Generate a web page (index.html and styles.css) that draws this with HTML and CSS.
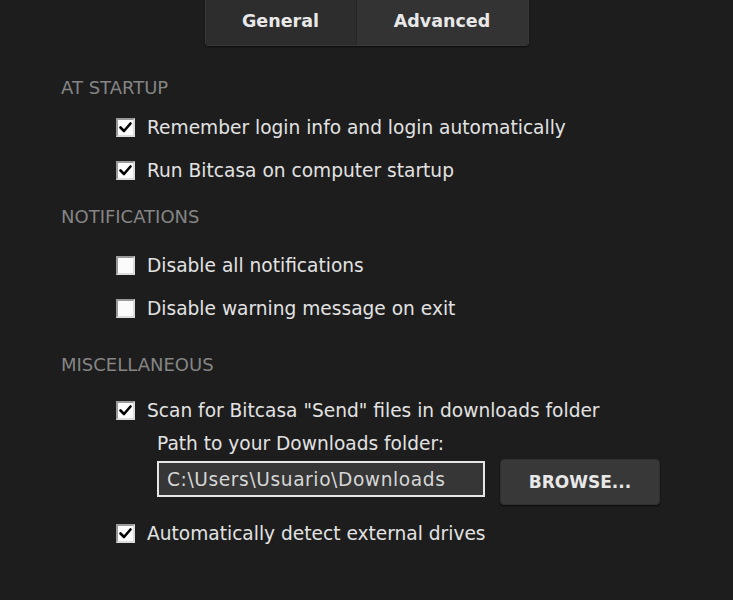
FILE: index.html
```html
<!DOCTYPE html>
<html>
<head>
<meta charset="utf-8">
<link rel="stylesheet" href="styles.css">
</head>
<body>
<div class="page">
  <div class="tabs">
    <div class="tab">General</div>
    <div class="tab active">Advanced</div>
  </div>

  <div class="heading h1">AT STARTUP</div>
  <label class="row r1"><span class="cb checked"><svg viewBox="0 0 19 19" width="19" height="19"><path d="M4.5 9.5 L8 13 L14.5 5.5" fill="none" stroke="#000" stroke-width="2.6" stroke-linecap="round" stroke-linejoin="round"/></svg></span><span class="txt">Remember login info and login automatically</span></label>
  <label class="row r2"><span class="cb checked"><svg viewBox="0 0 19 19" width="19" height="19"><path d="M4.5 9.5 L8 13 L14.5 5.5" fill="none" stroke="#000" stroke-width="2.6" stroke-linecap="round" stroke-linejoin="round"/></svg></span><span class="txt">Run Bitcasa on computer startup</span></label>

  <div class="heading h2">NOTIFICATIONS</div>
  <label class="row r3"><span class="cb"></span><span class="txt">Disable all notifications</span></label>
  <label class="row r2"><span class="cb"></span><span class="txt">Disable warning message on exit</span></label>

  <div class="heading h3">MISCELLANEOUS</div>
  <label class="row r5"><span class="cb checked"><svg viewBox="0 0 19 19" width="19" height="19"><path d="M4.5 9.5 L8 13 L14.5 5.5" fill="none" stroke="#000" stroke-width="2.6" stroke-linecap="round" stroke-linejoin="round"/></svg></span><span class="txt">Scan for Bitcasa "Send" files in downloads folder</span></label>
  <div class="path-label">Path to your Downloads folder:</div>
  <div class="path-row">
    <div class="path-input">C:\Users\Usuario\Downloads</div>
    <div class="browse">BROWSE...</div>
  </div>
  <label class="row r6"><span class="cb checked"><svg viewBox="0 0 19 19" width="19" height="19"><path d="M4.5 9.5 L8 13 L14.5 5.5" fill="none" stroke="#000" stroke-width="2.6" stroke-linecap="round" stroke-linejoin="round"/></svg></span><span class="txt">Automatically detect external drives</span></label>
</div>
</body>
</html>
```
FILE: styles.css
```css
html, body {
  margin: 0;
  padding: 0;
  background: #1d1d1d;
  height: 100%;
}
.page {
  width: 733px;
  height: 600px;
  display: flex;
  flex-direction: column;
  font-family: "DejaVu Sans", "Liberation Sans", sans-serif;
  color: #e2e2e2;
  font-size: 18.6px;
}
.tabs {
  align-self: center;
  display: flex;
  height: 46px;
  width: 324px;
  border: 1px solid #393939;
  border-top: none;
  border-radius: 0 0 4px 4px;
  overflow: hidden;
  box-sizing: border-box;
  box-shadow: 0 1px 2px rgba(0,0,0,0.6);
}
.tab {
  flex: 0 0 150px;
  display: flex;
  align-items: center;
  justify-content: center;
  background: #2d2d2d;
  color: #e8e8e8;
  font-weight: bold;
  font-size: 17.5px;
  padding-bottom: 3px;
  box-sizing: border-box;
}
.tab.active {
  flex: 1;
  background: #333333;
  border-left: 1px solid #262626;
}
.heading {
  height: 24px;
  line-height: 24px;
  padding-left: 61px;
  color: #858585;
  font-size: 18px;
}
.h1 { margin-top: 30px; }
.h2 { margin-top: 23px; }
.h3 { margin-top: 33px; }
.row {
  height: 24px;
  display: flex;
  align-items: center;
  padding-left: 116px;
}
.r1 { margin-top: 15px; }
.r2 { margin-top: 19px; }
.r3 { margin-top: 24px; }
.r5 { margin-top: 21px; }
.r6 { margin-top: 16px; }
.cb {
  width: 19px;
  height: 19px;
  box-sizing: border-box;
  background: #fbfbfb;
  border: 2px solid #9a9a9a;
  border-right-color: #dcdcdc;
  border-bottom-color: #dcdcdc;
  position: relative;
  flex: none;
}
.cb svg {
  position: absolute;
  left: -2px;
  top: -2px;
}
.txt {
  margin-left: 12px;
  white-space: nowrap;
}
.path-label {
  margin-top: 10px;
  height: 24px;
  line-height: 24px;
  padding-left: 157px;
}
.path-row {
  margin-top: 3px;
  height: 46px;
  display: flex;
  align-items: center;
  padding-left: 157px;
}
.path-input {
  width: 328px;
  height: 36px;
  box-sizing: border-box;
  border: 2px solid #e6e6e6;
  background: #363636;
  color: #d6d6d6;
  display: flex;
  align-items: center;
  padding-left: 8px;
  margin-top: -6px;
  letter-spacing: 0.6px;
  white-space: nowrap;
}
.browse {
  margin-left: 15px;
  width: 160px;
  height: 46px;
  border-radius: 4px;
  background: #383838;
  border: 1px solid #303030;
  box-sizing: border-box;
  box-shadow: 0 1px 2px rgba(0,0,0,0.6);
  display: flex;
  align-items: center;
  justify-content: center;
  color: #e8e8e8;
  font-weight: bold;
  font-size: 17px;
}
```
